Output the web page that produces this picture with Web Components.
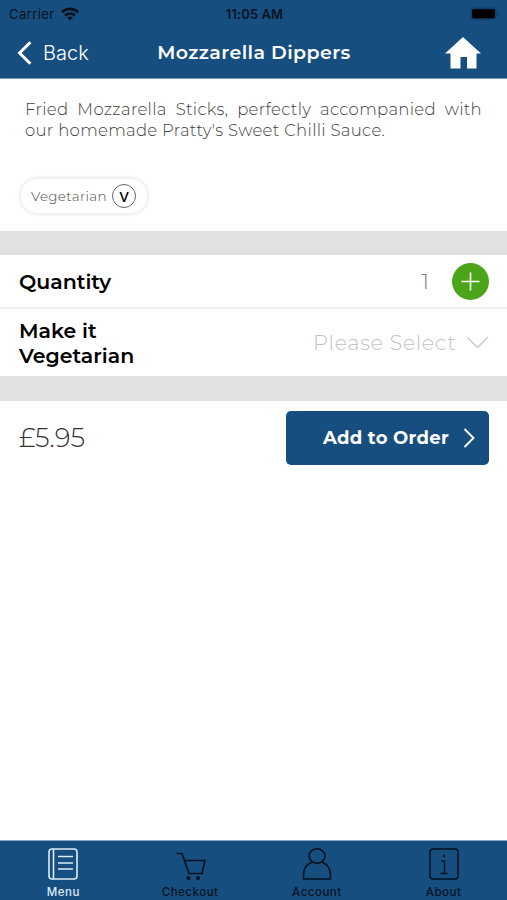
<!DOCTYPE html>
<html lang="en">
<head>
<meta charset="utf-8">
<meta name="viewport" content="width=device-width, initial-scale=1">
<title>Mozzarella Dippers</title>
<style>
  html, body {
    height: 100%;
    margin: 0;
  }

  body {
    --brand: #174e80;
    --band: #e1e1e3;
    --line: #eeeeef;
    --add: #4ba51b;
    background: #fff;
    color: #111;
    font-family: Montserrat, Inter, "Liberation Sans", sans-serif;
    overflow: hidden;
  }
</style>
</head>
<body>
<order-app></order-app>

<template id="status-bar">
  <style>
    :host {
      display: grid;
      grid-template-columns: 1fr auto 1fr;
      align-items: center;
      height: 28px;
      padding: 0 7px 0 9px;
      color: #07121e;
      font: 400 13px/28px Inter, sans-serif;
      box-sizing: border-box;
    }
    .carrier {
      display: flex;
      align-items: center;
      gap: 6px;
      letter-spacing: 0.42px;
    }
    .time {
      font-weight: 600;
      letter-spacing: 0.1px;
    }
    .battery {
      justify-self: end;
    }
    svg {
      display: block;
    }
  </style>
  <span class="carrier"><slot name="carrier"></slot>
    <svg width="18" height="14" viewBox="0 0 18 14" fill="none" stroke="#06101b" stroke-width="2.6">
      <path d="M1 5.2a11.4 11.4 0 0 1 16 0M4 8.5a7.2 7.2 0 0 1 10 0"/>
      <path d="M9 13.6L6.2 10.8a4 4 0 0 1 5.6 0z" fill="#06101b" stroke="none"/>
    </svg>
  </span>
  <span class="time"><slot name="time"></slot></span>
  <svg class="battery" width="30" height="14" viewBox="0 0 30 14">
    <rect x=".5" y=".5" width="26" height="12.5" rx="4" fill="#123f68"/>
    <rect x="2" y="2.2" width="23" height="9" rx="2" fill="#000"/>
    <path d="M27.8 4.5q2 2.2 0 4.4z" fill="#0d2e4c"/>
  </svg>
</template>

<template id="nav-bar">
  <style>
    :host {
      display: grid;
      grid-template-columns: 1fr auto 1fr;
      align-items: center;
      height: 51px;
      padding: 0 26px 0 17px;
      border-bottom: 1px solid #7699b8;
      color: #fff;
      box-sizing: border-box;
    }
    .back {
      display: flex;
      align-items: center;
      gap: 11px;
      font: 300 20px/24px Inter, sans-serif;
    }
    .title {
      margin: 0;
      font-size: 19px;
      font-weight: 600;
      line-height: 24px;
      letter-spacing: 0.4px;
      transform: translateX(5px);
    }
    .home {
      justify-self: end;
    }
    svg {
      display: block;
    }
  </style>
  <span class="back">
    <svg width="15" height="24" viewBox="0 0 15 24" fill="none" stroke="#fff" stroke-width="3"><path d="M13.4 1.3L2.6 12l10.8 10.7"/></svg>
    <slot name="back"></slot>
  </span>
  <h1 class="title"><slot></slot></h1>
  <svg class="home" width="36" height="32" viewBox="0 0 36 32" fill="#fff">
    <path d="M18 0L36 16.5H31.500V31.500H22V20h-6.500v11.500H5.500V16.500H0z"/>
  </svg>
</template>

<template id="diet-tag">
  <style>
    :host {
      display: inline-flex;
      align-items: center;
      width: 128px;
      height: 36px;
      padding: 0 11px 0 10px;
      justify-content: space-between;
      border: 1px solid #f0f0f0;
      border-radius: 18px;
      box-shadow: 0 0 3px 1px #ececec;
      color: #4b4b4b;
      font-size: 13.5px;
      font-weight: 300;
      box-sizing: border-box;
      letter-spacing: 0.35px;
    }
    .mark {
      display: grid;
      place-items: center;
      width: 24px;
      height: 24px;
      border: 1px solid #666;
      border-radius: 50%;
      color: #000;
      font: 500 15px/22px "Noto Sans", sans-serif;
      letter-spacing: 0;
      box-sizing: border-box;
    }
  </style>
  <slot></slot>
  <span class="mark"><slot name="mark"></slot></span>
</template>

<template id="option-row">
  <style>
    :host {
      display: flex;
      align-items: center;
      justify-content: space-between;
      padding: 0 18px 0 19px;
      box-sizing: border-box;
    }
    .label {
      max-width: 130px;
      color: #000;
      font-size: 20.5px;
      font-weight: 600;
      line-height: 25px;
    }
    .value {
      display: flex;
      align-items: center;
    }
  </style>
  <span class="label"><slot></slot></span>
  <span class="value"><slot name="value"></slot></span>
</template>

<template id="quantity-stepper">
  <style>
    :host {
      display: flex;
      align-items: center;
      gap: 23px;
      color: #777;
      font-size: 21px;
      font-weight: 300;
    }
    svg {
      display: block;
    }
  </style>
  <span class="count"></span>
  <svg width="37" height="37" viewBox="0 0 37 37">
    <circle cx="18.500" cy="18.500" r="18.500" fill="var(--add)"/>
    <path d="M18.500 9.500v18M9.500 18.500h18" stroke="#fff" stroke-width="1.600"/>
  </svg>
</template>

<template id="option-select">
  <style>
    :host {
      display: flex;
      align-items: center;
      gap: 10px;
      color: #c3c3c7;
      font-size: 21px;
      font-weight: 300;
      letter-spacing: 0.5px;
    }
    svg {
      display: block;
    }
  </style>
  <slot></slot>
  <svg width="23" height="13" viewBox="0 0 23 13" fill="none" stroke="#cfcfd2" stroke-width="1.600"><path d="M1 1l10.500 10.500L22 1"/></svg>
</template>

<template id="order-button">
  <style>
    :host {
      display: flex;
      align-items: center;
      justify-content: flex-end;
      gap: 14px;
      width: 203px;
      height: 54px;
      padding-right: 14px;
      border-radius: 5px;
      background: var(--brand);
      color: #fff;
      font-size: 18px;
      font-weight: 700;
      letter-spacing: 0.3px;
      box-sizing: border-box;
    }
    svg {
      display: block;
    }
  </style>
  <slot></slot>
  <svg width="12" height="20" viewBox="0 0 12 20" fill="none" stroke="#fff" stroke-width="1.900"><path d="M1.500 1l9 9-9 9"/></svg>
</template>

<template id="tab-item">
  <style>
    :host {
      display: flex;
      flex-direction: column;
      align-items: center;
      color: #05121f;
      font: 500 11.5px/14px Inter, sans-serif;
      letter-spacing: 0.5px;
    }
    :host([active]) {
      color: #dcebf9;
    }
    svg {
      display: block;
      width: 32px;
      height: 34px;
      margin-bottom: 4px;
      fill: none;
      stroke: currentColor;
      stroke-width: 1.6;
    }
  </style>
  <svg viewBox="0 0 32 34"></svg>
  <slot></slot>
</template>

<template id="order-app">
  <style>
    :host {
      display: flex;
      flex-direction: column;
      height: 100vh;
    }
    header, footer {
      background: var(--brand);
    }
    .about {
      height: 152px;
      padding: 20px 25px 0;
      box-sizing: border-box;
    }
    p {
      margin: 0;
      color: #414141;
      font-size: 16.5px;
      font-weight: 300;
      line-height: 21px;
      letter-spacing: 0.3px;
      text-align: justify;
    }
    diet-tag {
      margin: 37px 0 0 -5px;
    }
    .band {
      height: 24px;
      background: var(--band);
    }
    .band.low {
      height: 25px;
    }
    .quantity {
      height: 54px;
      border-bottom: 2px solid var(--line);
    }
    .choice {
      height: 67px;
    }
    .total {
      display: flex;
      align-items: center;
      justify-content: space-between;
      flex: 1;
      align-items: flex-start;
      padding: 10px 18px 0 19px;
    }
    .price {
      color: #333;
      font-size: 26px;
      font-weight: 300;
      line-height: 54px;
    }
    footer {
      display: grid;
      grid-template-columns: repeat(4, 1fr);
      height: 60px;
      padding-top: 6px;
      border-top: 1px solid #8ba8c2;
      box-sizing: border-box;
    }
  </style>
  <header>
    <status-bar><span slot="carrier">Carrier</span><span slot="time">11:05 AM</span></status-bar>
    <nav-bar><span slot="back">Back</span>Mozzarella Dippers</nav-bar>
  </header>
  <section class="about">
    <p>Fried Mozzarella Sticks, perfectly accompanied with our homemade Pratty's Sweet Chilli Sauce.</p>
    <diet-tag>Vegetarian<span slot="mark">V</span></diet-tag>
  </section>
  <div class="band"></div>
  <option-row class="quantity">Quantity<quantity-stepper slot="value" value="1"></quantity-stepper></option-row>
  <option-row class="choice">Make it Vegetarian<option-select slot="value">Please Select</option-select></option-row>
  <div class="band low"></div>
  <section class="total">
    <span class="price">£5.95</span>
    <order-button>Add to Order</order-button>
  </section>
  <footer>
    <tab-item icon="menu" active>Menu</tab-item>
    <tab-item icon="cart">Checkout</tab-item>
    <tab-item icon="person">Account</tab-item>
    <tab-item icon="info">About</tab-item>
  </footer>
</template>

<script>
  class TemplateElement extends HTMLElement {
    constructor() {
      super();

      const template = document.getElementById(this.localName);
      this.attachShadow({ mode: 'open' });
      this.shadowRoot.appendChild(template.content.cloneNode(true));
    }
  }

  class QuantityStepper extends TemplateElement {
    connectedCallback() {
      this.shadowRoot.querySelector('.count').innerText = this.getAttribute('value') || '0';
    }
  }

  const icons = {
    menu: '<rect x="2" y="2" width="28" height="30" rx="3"/><path d="M6.500 2v30M11 9.500h15M11 16h15M11 22h15"/>',
    cart: '<path d="M2.500 6.500h5.500l7 20h13l3-13H10.500"/><circle cx="14.500" cy="31" r="1.300" fill="currentColor"/><circle cx="24" cy="31" r="1.300" fill="currentColor"/>',
    person: '<ellipse cx="16" cy="9" rx="8" ry="7.200"/><path d="M11 15C5.500 17.500 2.500 22 2.500 28v4h27v-4c0-6-3-10.500-8.500-13"/>',
    info: '<rect x="2" y="2" width="28" height="30" rx="3"/><path d="M13 14h3.500v12M12.500 26.500h7" stroke-width="1.400"/><circle cx="16" cy="9" r="1.200" fill="currentColor" stroke="none"/>'
  };

  class TabItem extends TemplateElement {
    connectedCallback() {
      this.shadowRoot.querySelector('svg').innerHTML = icons[this.getAttribute('icon')] || '';
    }
  }

  window.customElements.define('status-bar', class extends TemplateElement {});
  window.customElements.define('nav-bar', class extends TemplateElement {});
  window.customElements.define('diet-tag', class extends TemplateElement {});
  window.customElements.define('option-row', class extends TemplateElement {});
  window.customElements.define('quantity-stepper', QuantityStepper);
  window.customElements.define('option-select', class extends TemplateElement {});
  window.customElements.define('order-button', class extends TemplateElement {});
  window.customElements.define('tab-item', TabItem);
  window.customElements.define('order-app', class extends TemplateElement {});
</script>
</body>
</html>
